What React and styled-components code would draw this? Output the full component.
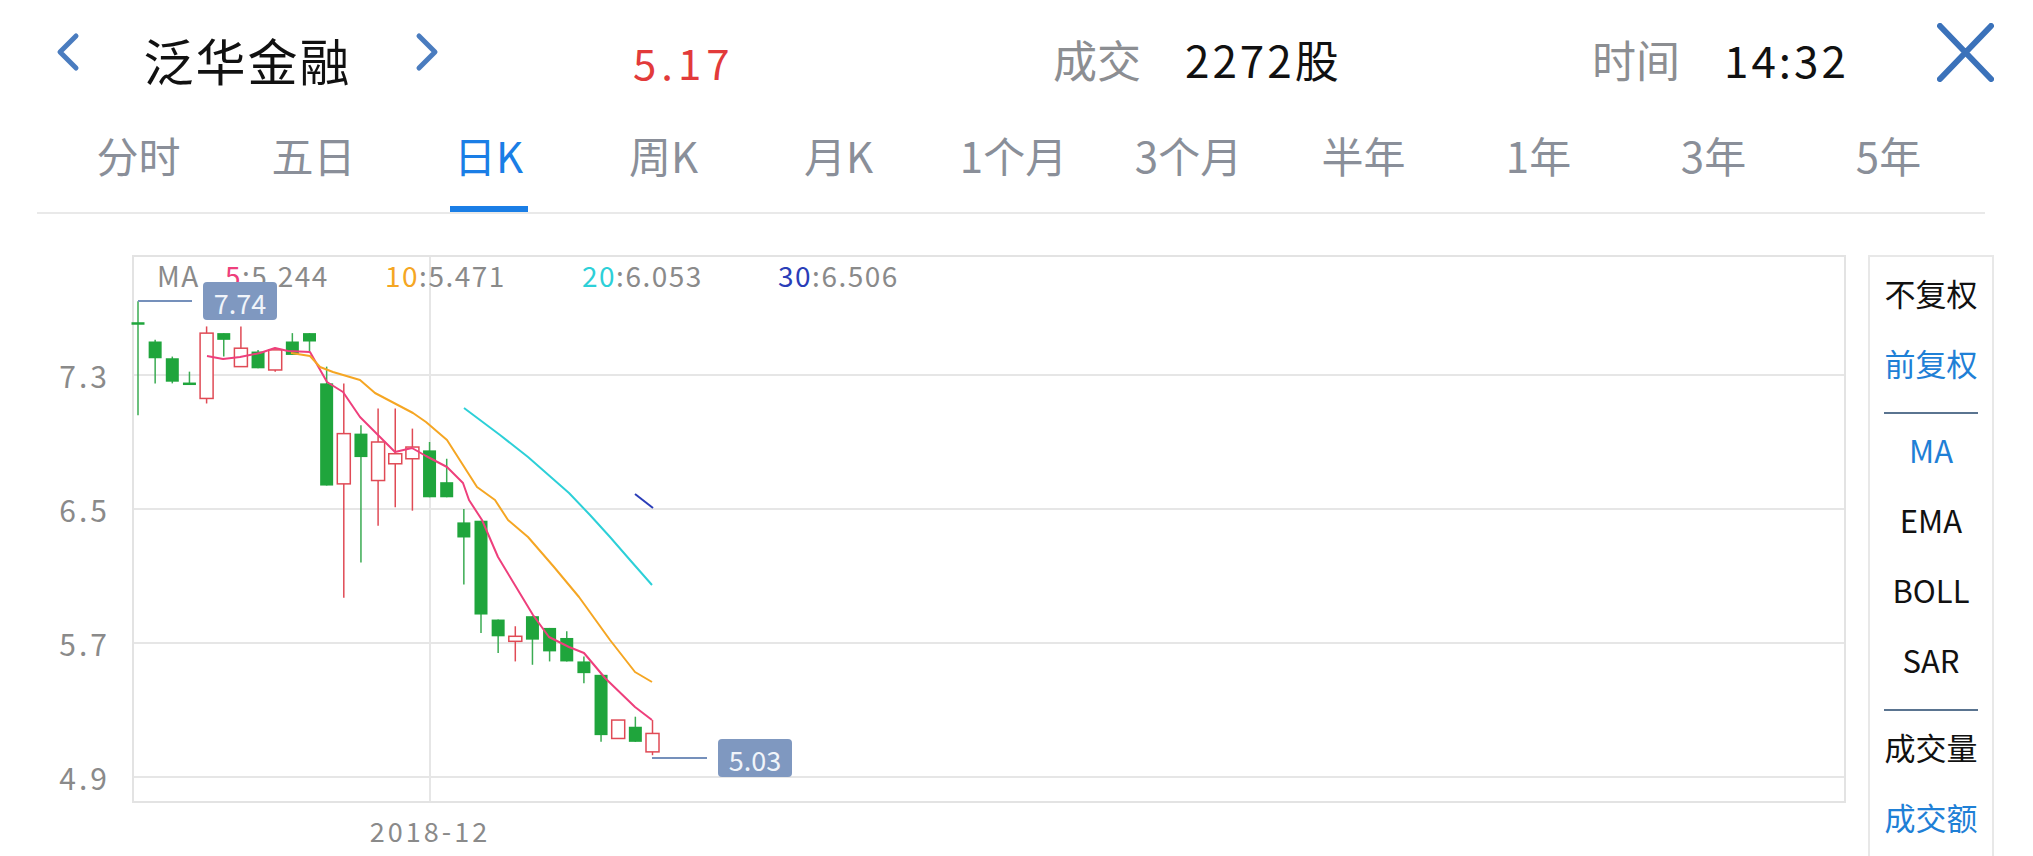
import React from "react";
import styled, { createGlobalStyle } from "styled-components";

const FONT = `"Noto Sans CJK SC", "Noto Sans", sans-serif`;

const GlobalStyle = createGlobalStyle`
  html, body { margin: 0; padding: 0; background: #fff; }
  body { font-family: ${FONT}; overflow: hidden; }
`;

const Page = styled.div`
  width: 2033px;
  height: 856px;
  overflow: hidden;
  background: #fff;
`;

/* ---------- header ---------- */
const Header = styled.header`
  display: flex;
  align-items: center;
  height: 118px;
  padding-left: 55px;
  box-sizing: border-box;
`;

const NavGroup = styled.div`
  display: flex;
  align-items: center;
  justify-content: space-between;
  width: 385px;
`;

const IconSvg = styled.svg`
  display: block;
  flex: none;
  margin-bottom: ${(p) => p.$lift || 0}px;
`;

const Title = styled.h1`
  margin: 0;
  font-size: 50px;
  font-weight: 400;
  line-height: 1;
  color: #111;
  letter-spacing: 2px;
`;

const Cell = styled.div`
  display: flex;
  align-items: center;
  width: ${(p) => p.$w}px;
  padding-left: ${(p) => p.$pl || 0}px;
  box-sizing: border-box;
`;

const PriceText = styled.span`
  font-size: 42px;
  line-height: 1;
  color: #e23a3a;
  letter-spacing: 5px;
  margin-top: 6px;
`;

const StatLabel = styled.span`
  font-size: 44px;
  line-height: 1;
  color: #8c8e92;
  margin-right: 44px;
`;

const StatValue = styled.span`
  font-size: 44px;
  line-height: 1;
  color: #111;
  letter-spacing: 3px;
`;

/* ---------- tabs ---------- */
const TabBar = styled.nav`
  display: flex;
  margin: 0 48px 0 37px;
  padding-left: 14px;
  border-bottom: 2px solid #e9e9e9;
`;

const Tab = styled.div`
  width: 175px;
  height: 94px;
  display: flex;
  flex-direction: column;
  align-items: center;
  justify-content: flex-end;
`;

const TabLabel = styled.span`
  font-size: 42px;
  line-height: 1;
  white-space: nowrap;
  color: ${(p) => (p.$active ? "#1a7ee6" : "#8a8f99")};
  margin-bottom: 30px;
`;

const TabLine = styled.span`
  width: 78px;
  height: 6px;
  background: ${(p) => (p.$active ? "#1a7ee6" : "transparent")};
`;

/* ---------- chart area ---------- */
const ChartRow = styled.section`
  display: flex;
  align-items: flex-start;
  padding-top: 41px;
`;

const YAxis = styled.div`
  width: 132px;
  flex: none;
  box-sizing: border-box;
  padding: 106px 22px 0 0;
  display: flex;
  flex-direction: column;
  align-items: flex-end;
  gap: 106px;
`;

const AxisLabel = styled.span`
  font-size: 30px;
  line-height: 28px;
  height: 28px;
  color: #8a8a8a;
  letter-spacing: 3px;
`;

const PlotColumn = styled.div`
  display: flex;
  flex-direction: column;
  width: 1714px;
  flex: none;
`;

const PlotBox = styled.div`
  width: 1714px;
  height: 548px;
  box-sizing: border-box;
  border: 2px solid #e3e3e3;
`;

const PlotSvg = styled.svg`
  display: block;
  overflow: visible;
`;

const XAxis = styled.div`
  display: flex;
  padding-top: 13px;
`;

const XTick = styled.span`
  margin-left: 223px;
  width: 150px;
  text-align: center;
  font-size: 27px;
  line-height: 30px;
  color: #8a8a8a;
  letter-spacing: 3px;
`;

const SidePanel = styled.aside`
  margin-left: 22px;
  width: 126px;
  flex: none;
  height: 640px;
  box-sizing: border-box;
  border: 2px solid #e8e8e8;
  border-bottom: none;
  display: flex;
  flex-direction: column;
  align-items: center;
  padding-top: 0;
`;

const PanelItem = styled.div`
  height: 70px;
  flex: none;
  display: flex;
  align-items: center;
  justify-content: center;
  font-size: 31px;
  white-space: nowrap;
  color: ${(p) => (p.$active ? "#1f80d6" : "#111")};
`;

const PanelDivider = styled.div`
  width: 94px;
  height: 2px;
  background: #5a7490;
  margin: 15px 0 0;
  flex: none;
`;

/* ---------- data ---------- */
const TABS = ["分时", "五日", "日K", "周K", "月K", "1个月", "3个月", "半年", "1年", "3年", "5年"];

// [open, high, low, close]
const CANDLES = [
  [7.615, 7.74, 7.06, 7.605],
  [7.5, 7.51, 7.25, 7.4],
  [7.4, 7.41, 7.25, 7.26],
  [7.255, 7.32, 7.245, 7.245],
  [7.16, 7.59, 7.13, 7.55],
  [7.55, 7.55, 7.41, 7.51],
  [7.35, 7.59, 7.35, 7.46],
  [7.44, 7.45, 7.34, 7.34],
  [7.33, 7.45, 7.32, 7.45],
  [7.5, 7.55, 7.42, 7.42],
  [7.55, 7.55, 7.44, 7.5],
  [7.25, 7.35, 6.64, 6.64],
  [6.65, 7.25, 5.97, 6.95],
  [6.95, 7.0, 6.18, 6.81],
  [6.67, 7.1, 6.4, 6.9],
  [6.77, 7.1, 6.51, 6.83],
  [6.8, 6.98, 6.49, 6.87],
  [6.85, 6.9, 6.57, 6.57],
  [6.66, 6.8, 6.57, 6.57],
  [6.42, 6.5, 6.05, 6.33],
  [6.43, 6.43, 5.76, 5.87],
  [5.84, 5.84, 5.64, 5.74],
  [5.71, 5.8, 5.59, 5.74],
  [5.86, 5.86, 5.57, 5.72],
  [5.79, 5.79, 5.59, 5.65],
  [5.73, 5.77, 5.59, 5.59],
  [5.59, 5.62, 5.46, 5.52],
  [5.51, 5.51, 5.11, 5.15],
  [5.13, 5.24, 5.13, 5.24],
  [5.2, 5.26, 5.11, 5.11],
  [5.05, 5.24, 5.03, 5.16],
];

// moving average traces (page coordinates)
const MA5 = [[207,356],[223,359],[240,357],[260,353],[275,348],[288,351],[310,352],[327,382],[343,392],[360,417],[383,440],[395,452],[412,448],[426,456],[447,467],[463,483],[469,500],[482,520],[498,557],[533,615],[549,637],[569,647],[584,653],[605,678],[635,707],[652,720]];
const MA10 = [[291,353],[310,356],[320,367],[333,372],[360,380],[375,393],[413,413],[426,422],[447,440],[477,487],[495,500],[508,520],[528,537],[554,567],[579,597],[610,640],[635,672],[652,682]];
const MA20 = [[464,408],[500,435],[528,457],[569,493],[590,515],[610,537],[630,560],[652,585]];
const MA30 = [[635,494],[653,508]];

const OX = 134;
const OY = 257;
const pts = (arr) => arr.map(([x, y]) => `${x - OX},${y - OY}`).join(" ");
const toX = (i) => 4 + 17.15 * i;
const toY = (p) => 118 - (p - 7.3) * 167.5;

const GREEN = "#1fa53c";
const RED = "#e04a55";
const GRID = "#e6e6e6";
const LABEL_BG = "#7f98c0";

const LEGEND = [
  { x: 91, key: "5", color: "#ee3f7c", val: ":5.244" },
  { x: 251, key: "10", color: "#f5a623", val: ":5.471" },
  { x: 448, key: "20", color: "#2dd0d8", val: ":6.053" },
  { x: 644, key: "30", color: "#2a3db8", val: ":6.506" },
];

const KChart = () => (
  <PlotSvg width="1710" height="544" viewBox="0 0 1710 544">
    {[7.3, 6.5, 5.7, 4.9].map((p) => (
      <line key={p} x1="0" x2="1710" y1={toY(p)} y2={toY(p)} stroke={GRID} strokeWidth="2" />
    ))}
    <line x1="296" x2="296" y1="0" y2="544" stroke={GRID} strokeWidth="2" />

    <g fontFamily={FONT} fontSize="28" letterSpacing="1.5">
      <text x="23" y="30" fill="#8a8a8a">MA</text>
      {LEGEND.map((l) => (
        <text key={l.key} x={l.x} y="30" fill="#8a8a8a">
          <tspan fill={l.color}>{l.key}</tspan>
          {l.val}
        </text>
      ))}
    </g>

    {CANDLES.map(([o, h, l, c], i) => {
      const up = c >= o;
      const x = toX(i);
      const top = toY(Math.max(o, c));
      const bot = toY(Math.min(o, c));
      const hgt = Math.max(bot - top, 2.5);
      return (
        <g key={i}>
          <line x1={x} x2={x} y1={toY(h)} y2={toY(l)} stroke={up ? RED : "#3aab52"} strokeWidth="1.5" />
          <rect
            x={x - 6.5}
            y={top}
            width="13"
            height={hgt}
            fill={up ? "#fff" : GREEN}
            stroke={up ? RED : "none"}
            strokeWidth="1.5"
          />
        </g>
      );
    })}

    <polyline points={pts(MA5)} fill="none" stroke="#ee3f7c" strokeWidth="2" strokeLinejoin="round" />
    <polyline points={pts(MA10)} fill="none" stroke="#f5a623" strokeWidth="2" strokeLinejoin="round" />
    <polyline points={pts(MA20)} fill="none" stroke="#2dd0d8" strokeWidth="2" strokeLinejoin="round" />
    <polyline points={pts(MA30)} fill="none" stroke="#2a3db8" strokeWidth="2" />

    <g fontFamily={FONT} fontSize="27">
      <line x1="4" x2="58" y1="44" y2="44" stroke="#7590bb" strokeWidth="2" />
      <rect x="69" y="25" width="74" height="38" rx="4" fill={LABEL_BG} />
      <text x="106" y="45" fill="#f0f4fa" textAnchor="middle" dominantBaseline="central">7.74</text>

      <line x1="518" x2="573" y1="501" y2="501" stroke="#7590bb" strokeWidth="2" />
      <rect x="584" y="482" width="74" height="38" rx="4" fill={LABEL_BG} />
      <text x="621" y="502" fill="#f0f4fa" textAnchor="middle" dominantBaseline="central">5.03</text>
    </g>
  </PlotSvg>
);

const Chevron = ({ dir }) => (
  <IconSvg width="25" height="40" viewBox="0 0 25 40" $lift={14}>
    <path
      d={dir === "left" ? "M21 4 L5 20 L21 36" : "M4 4 L20 20 L4 36"}
      fill="none"
      stroke="#4a7cbf"
      strokeWidth="5"
      strokeLinecap="round"
      strokeLinejoin="round"
    />
  </IconSvg>
);

const CloseIcon = () => (
  <IconSvg width="57" height="59" viewBox="0 0 57 59" $lift={14}>
    <path d="M3 3 L54 56 M54 3 L3 56" stroke="#3b72ba" strokeWidth="6" strokeLinecap="round" />
  </IconSvg>
);

export default function App() {
  return (
    <Page>
      <GlobalStyle />
      <Header>
        <NavGroup>
          <Chevron dir="left" />
          <Title>泛华金融</Title>
          <Chevron dir="right" />
        </NavGroup>
        <Cell $w={613} $pl={193}>
          <PriceText>5.17</PriceText>
        </Cell>
        <Cell $w={539}>
          <StatLabel>成交</StatLabel>
          <StatValue>2272股</StatValue>
        </Cell>
        <Cell $w={345}>
          <StatLabel>时间</StatLabel>
          <StatValue>14:32</StatValue>
        </Cell>
        <CloseIcon />
      </Header>

      <TabBar>
        {TABS.map((t) => (
          <Tab key={t}>
            <TabLabel $active={t === "日K"}>{t}</TabLabel>
            <TabLine $active={t === "日K"} />
          </Tab>
        ))}
      </TabBar>

      <ChartRow>
        <YAxis>
          {["7.3", "6.5", "5.7", "4.9"].map((v) => (
            <AxisLabel key={v}>{v}</AxisLabel>
          ))}
        </YAxis>
        <PlotColumn>
          <PlotBox>
            <KChart />
          </PlotBox>
          <XAxis>
            <XTick>2018-12</XTick>
          </XAxis>
        </PlotColumn>
        <SidePanel>
          <PanelItem>不复权</PanelItem>
          <PanelItem $active>前复权</PanelItem>
          <PanelDivider />
          <PanelItem $active>MA</PanelItem>
          <PanelItem>EMA</PanelItem>
          <PanelItem>BOLL</PanelItem>
          <PanelItem>SAR</PanelItem>
          <PanelDivider />
          <PanelItem>成交量</PanelItem>
          <PanelItem $active>成交额</PanelItem>
        </SidePanel>
      </ChartRow>
    </Page>
  );
}
